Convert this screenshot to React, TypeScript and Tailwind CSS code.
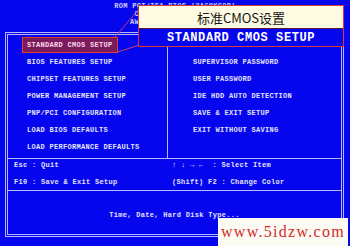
const leftItems = [
  'STANDARD CMOS SETUP',
  'BIOS FEATURES SETUP',
  'CHIPSET FEATURES SETUP',
  'POWER MANAGEMENT SETUP',
  'PNP/PCI CONFIGURATION',
  'LOAD BIOS DEFAULTS',
  'LOAD PERFORMANCE DEFAULTS',
]

const rightItems = [
  'SUPERVISOR PASSWORD',
  'USER PASSWORD',
  'IDE HDD AUTO DETECTION',
  'SAVE & EXIT SETUP',
  'EXIT WITHOUT SAVING',
]

function MenuItem({ label, active }: { label: string; active?: boolean }) {
  return (
    <div
      className={
        active
          ? 'h-[16px] w-fit pl-[4px] pr-[4px] flex items-center border border-[#e03a3a] bg-[#7a1c5c] text-[#ffd6e8]'
          : 'h-[16px] w-fit pl-[4px] pr-[4px] flex items-center border border-transparent'
      }
    >
      {label}
    </div>
  )
}

export default function App() {
  return (
    <div className="relative w-[350px] h-[246px] overflow-hidden bg-[#0606ee] text-[#e2e2ff] font-['Liberation_Mono','DejaVu_Sans_Mono',monospace] font-bold text-[7px] leading-none tracking-[0.3px]">
      {/* Header */}
      <div className="h-[32px] pt-[2px] flex flex-col items-center leading-[8px] text-[#cfcfff]">
        <div>ROM PCI/ISA BIOS (2A69KG0B)</div>
        <div>CMOS SETUP UTILITY</div>
        <div>AWARD SOFTWARE, INC.</div>
      </div>

      {/* Main frame */}
      <div className="ml-[5px] w-[339px] h-[205px] border-[3px] border-double border-[#b8b8ff] flex flex-col">
        {/* Menu */}
        <div className="h-[124px] flex border-b border-[#b8b8ff]">
          <div className="w-[160px] border-r border-[#b8b8ff] pl-[14px] pt-[2px] flex flex-col gap-[1px]">
            {leftItems.map((it, i) => (
              <MenuItem key={it} label={it} active={i === 0} />
            ))}
          </div>
          <div className="flex-1 pl-[20px] pt-[19px] flex flex-col gap-[1px]">
            {rightItems.map((it) => (
              <MenuItem key={it} label={it} />
            ))}
          </div>
        </div>

        {/* Keys */}
        <div className="h-[32px] flex border-b border-[#b8b8ff]">
          <div className="w-[164px] pl-[6px] flex flex-col gap-[5px]">
            <div className="h-[12px] flex items-center">Esc : Quit</div>
            <div className="h-[12px] flex items-center">F10 : Save &amp; Exit Setup</div>
          </div>
          <div className="flex-1 flex flex-col gap-[5px]">
            <div className="h-[12px] flex items-center">↑ ↓ → ←&nbsp; : Select Item</div>
            <div className="h-[12px] flex items-center">(Shift) F2 : Change Color</div>
          </div>
        </div>

        {/* Description */}
        <div className="flex-1 flex justify-center pt-[20px] leading-[8px]">
          Time, Date, Hard Disk Type...
        </div>
      </div>

      {/* Pointer lines */}
      <svg className="absolute left-0 top-0 pointer-events-none" width="350" height="246">
        <line x1="115" y1="37" x2="139" y2="9" stroke="#c43c70" strokeWidth="1" />
        <line x1="115" y1="53" x2="139" y2="45" stroke="#c43c70" strokeWidth="1" />
      </svg>

      {/* Callout */}
      <div className="absolute left-[138px] top-[5px] w-[206px] h-[42px] border border-[#d83a3a] flex flex-col">
        <div className="h-[22px] bg-[#fffbe2] flex items-center justify-center text-[13px] font-normal tracking-normal text-[#141414] font-['Noto_Sans_CJK_SC',sans-serif]">
          标准CMOS设置
        </div>
        <div className="flex-1 bg-[#0606ee] border-t border-[#5a1838] flex items-center justify-center text-[12px] text-white tracking-[0.6px]">
          STANDARD CMOS SETUP
        </div>
      </div>

      {/* Watermark */}
      <div className="absolute left-[218px] top-[218px] w-[130px] h-[28px] bg-[#fbfbf4] flex items-center justify-center font-['Liberation_Serif',serif] font-normal text-[16px] tracking-[1.3px] text-[#d42a2a]">
        www.5idzw.com
      </div>
    </div>
  )
}
